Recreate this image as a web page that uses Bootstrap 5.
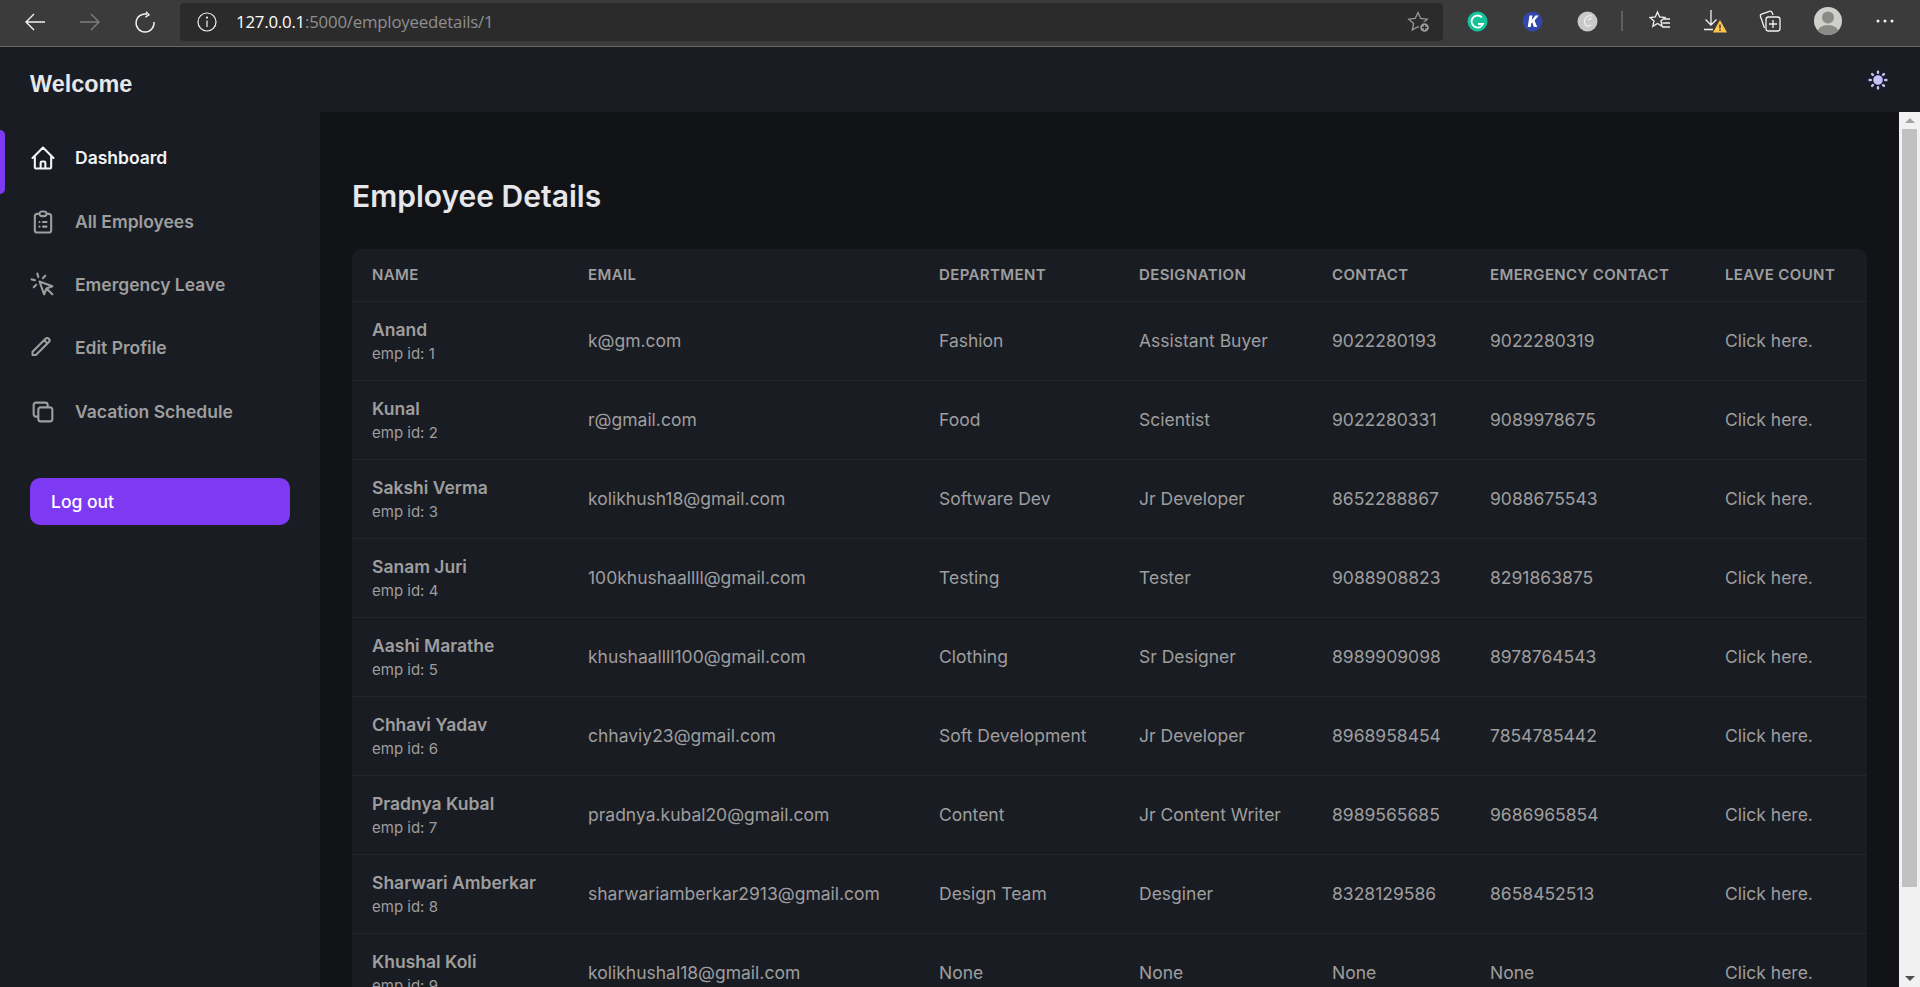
<!DOCTYPE html>
<html lang="en">

<head>
    <meta charset="UTF-8">
    <meta name="viewport" content="width=device-width, initial-scale=1.0">
    <title>Employee Details</title>
    <link href="https://cdn.jsdelivr.net/npm/bootstrap@5.3.3/dist/css/bootstrap.min.css" rel="stylesheet">
    <style>
        html, body { height: 100%; margin: 0; }
        body { overflow: hidden; background: #1a1c23; font-family: Inter, "Liberation Sans", sans-serif; color: #9e9e9e; }

        .chrome-bar { height: 47px; background: #3b3b3b; border-bottom: 1px solid #6a6a6a; flex-shrink: 0; }
        .chrome-btn { width: 55px; }
        .chrome-nav { width: 180px; padding-left: 7px; margin-top: -3px; }
        .chrome-url { width: 1263px; height: 38px; margin: 3px 0 5px; background: #2b2b2b; border-radius: 4px; padding: 0 12px 0 17px; }
        .url-text { font-family: "Open Sans", "Liberation Sans", sans-serif; font-size: 16.8px; margin-left: 19px; letter-spacing: -.2px; color: #8f8f8f; }
        .url-text b { font-weight: 400; color: #fff; }
        .ext-slot { width: 55px; }
        .ext-first { margin-left: 7px; }
        .chrome-sep { width: 2px; height: 20px; background: #5f5f5f; margin: 0 9px 0 6px; }
        .tool-slot { width: 56px; }
        .tool-coll { width: 51px; }
        .tool-avatar { width: 66px; }
        .tool-dots { width: 48px; }

        .top-bar { height: 65px; flex-shrink: 0; padding: 0 30px; }
        .brand-text { font-family: "Liberation Sans", Arial, sans-serif; font-size: 23.4px; font-weight: 700; color: #e5e7eb; margin-top: 10px; }

        .side-col { width: 320px; flex-shrink: 0; padding-top: 14.8px; }
        .side-link { height: 63.3px; padding-left: 28.5px; color: #9e9e9e; font-size: 17.5px; font-weight: 600; text-decoration: none; position: relative; }
        .side-link svg { width: 28px; height: 28px; margin-right: 18.5px; flex-shrink: 0; }
        .side-active { color: #f3f4f6; }
        .active-mark { position: absolute; left: 0; top: 3.2px; width: 5px; height: 64px; background: #7e3af2; border-radius: 0 6px 6px 0; }
        .logout-btn { display: block; width: 260px; height: 47px; margin: 34.6px 0 0 30px; padding: 1px 0 0 21px; background: #7e3af2; border: 0; border-radius: 10px; color: #fff; font-size: 17.5px; font-weight: 500; text-align: left; }
        .logout-btn:hover { background: #7e3af2; color: #fff; }

        .main-col { background: #121317; padding: 65px 32px 0; overflow: hidden; }
        .page-title { font-size: 30px; line-height: 38px; font-weight: 600; color: #e5e7eb; margin: 0 0 34px; }
        .table-wrap { background: #1a1c23; border-radius: 10px 10px 0 0; overflow: hidden; }
        .emp-table { --bs-table-bg: #1a1c23; --bs-table-color: #9e9e9e; --bs-table-border-color: #24262d; table-layout: fixed; width: 1515px; margin: 0; font-size: 17.5px; }
        .emp-table th { height: 52px; padding: 0 0 0 19px; vertical-align: middle; font-size: 15px; font-weight: 600; letter-spacing: .375px; text-transform: uppercase; color: #9e9e9e; white-space: nowrap; }
        .emp-table td { height: 79px; padding: 1px 0 0 19px; vertical-align: middle; font-weight: 400; white-space: nowrap; color: #9e9e9e; }
        .emp-table th:first-child, .emp-table td:first-child { padding-left: 20px; }
        .w-name { width: 217px; }
        .w-email { width: 351px; }
        .w-dept { width: 200px; }
        .w-desig { width: 193px; }
        .w-contact { width: 158px; }
        .w-emerg { width: 235px; }
        .emp-name { font-weight: 600; line-height: 24px; margin-top: 2px; }
        .emp-id { font-size: 15px; line-height: 24px; }

        .fake-scroll { width: 21px; flex-shrink: 0; background: #f1f1f1; }
        .scroll-up, .scroll-down { height: 17px; }
        .scroll-thumb { width: 15px; height: 758px; background: #c1c1c1; }
        .arrow-up { width: 0; height: 0; border-left: 5px solid transparent; border-right: 5px solid transparent; border-bottom: 5px solid #a3a3a3; }
        .arrow-down { width: 0; height: 0; border-left: 5px solid transparent; border-right: 5px solid transparent; border-top: 5px solid #505050; }
    </style>
</head>

<body class="d-flex flex-column">

    <div class="chrome-bar d-flex align-items-center">
        <div class="chrome-nav d-flex align-items-center">
            <div class="chrome-btn d-flex justify-content-center">
                <svg width="22" height="22" viewBox="0 0 22 22" fill="none" stroke="#f2f2f2" stroke-width="1.4"><path d="M21 11H2M10 3l-8 8 8 8"/></svg>
            </div>
            <div class="chrome-btn d-flex justify-content-center">
                <svg width="22" height="22" viewBox="0 0 22 22" fill="none" stroke="#7d7d7d" stroke-width="1.4"><path d="M1 11h19M12 3l8 8-8 8"/></svg>
            </div>
            <div class="chrome-btn d-flex justify-content-center">
                <svg width="22" height="22" viewBox="0 0 22 22" fill="none" stroke="#f2f2f2" stroke-width="1.4"><path d="M13 3.200A9 9 0 1 0 20 11M12 .8l3 3-3.600 2.400"/></svg>
            </div>
        </div>
        <div class="chrome-url d-flex align-items-center">
            <svg width="20" height="20" viewBox="0 0 20 20" fill="none" stroke="#f2f2f2" stroke-width="1.2"><circle cx="10" cy="10" r="9"/><path d="M10 8.500V15"/><circle cx="10" cy="5.600" r=".5" fill="#f2f2f2"/></svg>
            <span class="url-text"><b>127.0.0.1</b>:5000/employeedetails/1</span>
            <svg class="ms-auto" width="24" height="24" viewBox="0 0 24 24" fill="none" stroke="#9a9a9a" stroke-width="1.3"><path d="M11 2.500l2.800 6 6.400.7-4.800 4.400 1.300 6.300-5.700-3.200-5.700 3.200 1.300-6.300L1.800 9.200l6.400-.7z"/><circle cx="17.500" cy="17.500" r="5" fill="#9a9a9a" stroke="#2b2b2b"/><path d="M17.500 15v5M15 17.500h5" stroke="#2b2b2b"/></svg>
        </div>
        <div class="ext-slot ext-first d-flex justify-content-center mb-1">
            <svg width="21" height="21" viewBox="0 0 21 21"><circle cx="10.500" cy="10.500" r="10" fill="#15c39a"/><path d="M15 6.500a6 6 0 1 0 1 6.500h-5" fill="none" stroke="#fff" stroke-width="1.800"/></svg>
        </div>
        <div class="ext-slot d-flex justify-content-center mb-1">
            <svg width="21" height="21" viewBox="0 0 21 21"><circle cx="10.500" cy="10.500" r="10" fill="#3345a8"/><path d="M7.500 4.500h3L9.800 9l3.600-4.500h3.300L12.600 9.600l2.600 6.400h-3.300l-1.600-4.600-1 .9-.6 3.700h-3z" fill="#fff"/></svg>
        </div>
        <div class="ext-slot d-flex justify-content-center mb-1">
            <svg width="21" height="21" viewBox="0 0 21 21"><circle cx="10.500" cy="10.500" r="10" fill="#c9c9c9"/><path d="M15 5c-4-1.500-8 2-7.500 6.500.4 3.500 4 4.500 6.500 2.500M11 9.500c1-2 3.500-2.500 3.500-1" fill="none" stroke="#f0f0f0" stroke-width="1.200"/></svg>
        </div>
        <div class="chrome-sep mb-1"></div>
        <div class="tool-slot d-flex justify-content-center mb-1">
            <svg width="22" height="22" viewBox="0 0 22 22" fill="none" stroke="#f2f2f2" stroke-width="1.3"><path d="M8.500 2l2.100 5 5.400.500-4.100 3.500 1.300 5.300-4.700-2.800-4.700 2.800L5 11 .9 7.500 6.300 7z"/><path d="M15 9h6M13.500 13h7.500M13.500 17h7.500"/></svg>
        </div>
        <div class="tool-slot d-flex justify-content-center mb-1">
            <svg width="24" height="24" viewBox="0 0 24 24" fill="none" stroke="#f2f2f2" stroke-width="1.3"><path d="M7 1v15M1.500 10.500L7 16l5.500-5.500M0 20.500h9"/><path d="M16 11l7 12.500H9z" fill="#ffc84a" stroke="none"/><path d="M16 15.500v4M16 20.500v1.500" stroke="#3b3b3b" stroke-width="1.500"/></svg>
        </div>
        <div class="tool-coll d-flex justify-content-center mb-1">
            <svg width="22" height="22" viewBox="0 0 22 22" fill="none" stroke="#f2f2f2" stroke-width="1.3"><path d="M5.500 18L1.500 6.500c-.4-1.100 0-2 1-2.400l8-2.800c1.100-.4 2-.1 2.500 1l1 2.700"/><rect x="7" y="7" width="14" height="14" rx="2.500"/><path d="M14 10v8M10 14h8"/></svg>
        </div>
        <div class="tool-avatar d-flex justify-content-center mb-1">
            <svg width="28" height="28" viewBox="0 0 28 28"><defs><clipPath id="avatarClip"><circle cx="14" cy="14" r="14"/></clipPath></defs><circle cx="14" cy="14" r="14" fill="#cfcfcb"/><g clip-path="url(#avatarClip)"><circle cx="14" cy="10.500" r="6" fill="#8b8b88"/><ellipse cx="14" cy="26" rx="11" ry="8" fill="#8b8b88"/></g></svg>
        </div>
        <div class="tool-dots d-flex justify-content-center mb-1">
            <svg width="18" height="4" viewBox="0 0 18 4" fill="#f2f2f2"><circle cx="2" cy="2" r="1.500"/><circle cx="9" cy="2" r="1.500"/><circle cx="16" cy="2" r="1.500"/></svg>
        </div>
    </div>

    <header class="top-bar d-flex align-items-center justify-content-between">
        <span class="brand-text">Welcome</span>
        <svg width="24" height="24" viewBox="0 0 20 20" fill="#cabffd"><path d="M10 2a1 1 0 011 1v1a1 1 0 11-2 0V3a1 1 0 011-1zm4 8a4 4 0 11-8 0 4 4 0 018 0zm-.464 4.950l.707.707a1 1 0 001.414-1.414l-.707-.707a1 1 0 00-1.414 1.414zm2.120-10.607a1 1 0 010 1.414l-.706.707a1 1 0 11-1.414-1.414l.707-.707a1 1 0 011.414 0zM17 11a1 1 0 100-2h-1a1 1 0 100 2h1zm-7 4a1 1 0 011 1v1a1 1 0 11-2 0v-1a1 1 0 011-1zM5.050 6.464A1 1 0 106.465 5.050l-.708-.707a1 1 0 00-1.414 1.414l.707.707zm1.414 8.486l-.707.707a1 1 0 01-1.414-1.414l.707-.707a1 1 0 011.414 1.414zM4 11a1 1 0 100-2H3a1 1 0 000 2h1z"/></svg>
    </header>

    <div class="d-flex flex-grow-1 overflow-hidden">
        <aside class="side-col">
            <nav class="nav flex-column">
                <a class="side-link side-active d-flex align-items-center" href="#">
                    <span class="active-mark"></span>
                    <svg viewBox="0 0 24 24" fill="none" stroke="currentColor" stroke-width="1.8" stroke-linecap="round" stroke-linejoin="round"><path d="M3 12l2-2m0 0l7-7 7 7M5 10v10a1 1 0 001 1h3m10-11l2 2m-2-2v10a1 1 0 01-1 1h-3m-6 0a1 1 0 001-1v-4a1 1 0 011-1h2a1 1 0 011 1v4a1 1 0 001 1m-6 0h6"/></svg>
                    Dashboard
                </a>
                <a class="side-link d-flex align-items-center" href="#">
                    <svg viewBox="0 0 24 24" fill="none" stroke="currentColor" stroke-width="1.8" stroke-linecap="round" stroke-linejoin="round"><path d="M9 5H7a2 2 0 00-2 2v12a2 2 0 002 2h10a2 2 0 002-2V7a2 2 0 00-2-2h-2M9 5a2 2 0 002 2h2a2 2 0 002-2M9 5a2 2 0 012-2h2a2 2 0 012 2m-3 7h3m-3 4h3m-6-4h.01M9 16h.01"/></svg>
                    All Employees
                </a>
                <a class="side-link d-flex align-items-center" href="#">
                    <svg viewBox="0 0 24 24" fill="none" stroke="currentColor" stroke-width="1.8" stroke-linecap="round" stroke-linejoin="round"><path d="M15 15l-2 5L9 9l11 4-5 2zm0 0l5 5M7.188 2.239l.777 2.897M5.136 7.965l-2.898-.777M13.950 4.050l-2.122 2.122m-5.657 5.656l-2.120 2.122"/></svg>
                    Emergency Leave
                </a>
                <a class="side-link d-flex align-items-center" href="#">
                    <svg viewBox="0 0 24 24" fill="none" stroke="currentColor" stroke-width="2.2" stroke-linecap="round" stroke-linejoin="round"><path transform="translate(.6 1) scale(.81)" d="M15.232 5.232l3.536 3.536m-2.036-5.036a2.500 2.500 0 113.536 3.536L6.500 21.036H3v-3.572L16.732 3.732z"/></svg>
                    Edit Profile
                </a>
                <a class="side-link d-flex align-items-center" href="#">
                    <svg viewBox="0 0 24 24" fill="none" stroke="currentColor" stroke-width="1.8" stroke-linecap="round" stroke-linejoin="round"><path d="M8 16H6a2 2 0 01-2-2V6a2 2 0 012-2h8a2 2 0 012 2v2m-6 12h8a2 2 0 002-2v-8a2 2 0 00-2-2h-8a2 2 0 00-2 2v8a2 2 0 002 2z"/></svg>
                    Vacation Schedule
                </a>
            </nav>
            <button class="btn logout-btn" type="button">Log out</button>
        </aside>

        <main class="main-col flex-grow-1">
            <h2 class="page-title">Employee Details</h2>
            <div class="table-wrap">
                <table class="table emp-table">
                    <thead>
                        <tr>
                            <th class="w-name">Name</th>
                            <th class="w-email">Email</th>
                            <th class="w-dept">Department</th>
                            <th class="w-desig">Designation</th>
                            <th class="w-contact">Contact</th>
                            <th class="w-emerg">Emergency Contact</th>
                            <th>Leave Count</th>
                        </tr>
                    </thead>
                    <tbody id="emp-rows"></tbody>
                </table>
            </div>
        </main>

        <div class="fake-scroll d-flex flex-column align-items-center">
            <div class="scroll-up d-flex align-items-center justify-content-center"><div class="arrow-up"></div></div>
            <div class="scroll-thumb"></div>
            <div class="scroll-down d-flex align-items-center justify-content-center mt-auto"><div class="arrow-down"></div></div>
        </div>
    </div>

    <script src="https://cdn.jsdelivr.net/npm/bootstrap@5.3.3/dist/js/bootstrap.bundle.min.js"></script>
    <script>
        const employees = [
            ['Anand', 'k@gm.com', 'Fashion', 'Assistant Buyer', '9022280193', '9022280319'],
            ['Kunal', 'r@gmail.com', 'Food', 'Scientist', '9022280331', '9089978675'],
            ['Sakshi Verma', 'kolikhush18@gmail.com', 'Software Dev', 'Jr Developer', '8652288867', '9088675543'],
            ['Sanam Juri', '100khushaallll@gmail.com', 'Testing', 'Tester', '9088908823', '8291863875'],
            ['Aashi Marathe', 'khushaallll100@gmail.com', 'Clothing', 'Sr Designer', '8989909098', '8978764543'],
            ['Chhavi Yadav', 'chhaviy23@gmail.com', 'Soft Development', 'Jr Developer', '8968958454', '7854785442'],
            ['Pradnya Kubal', 'pradnya.kubal20@gmail.com', 'Content', 'Jr Content Writer', '8989565685', '9686965854'],
            ['Sharwari Amberkar', 'sharwariamberkar2913@gmail.com', 'Design Team', 'Desginer', '8328129586', '8658452513'],
            ['Khushal Koli', 'kolikhushal18@gmail.com', 'None', 'None', 'None', 'None']
        ];
        document.getElementById('emp-rows').innerHTML = employees.map((e, i) => `
            <tr>
                <td><div class="emp-name">${e[0]}</div><div class="emp-id">emp id: ${i + 1}</div></td>
                <td>${e[1]}</td>
                <td>${e[2]}</td>
                <td>${e[3]}</td>
                <td>${e[4]}</td>
                <td>${e[5]}</td>
                <td>Click here.</td>
            </tr>`).join('');
    </script>
</body>

</html>
